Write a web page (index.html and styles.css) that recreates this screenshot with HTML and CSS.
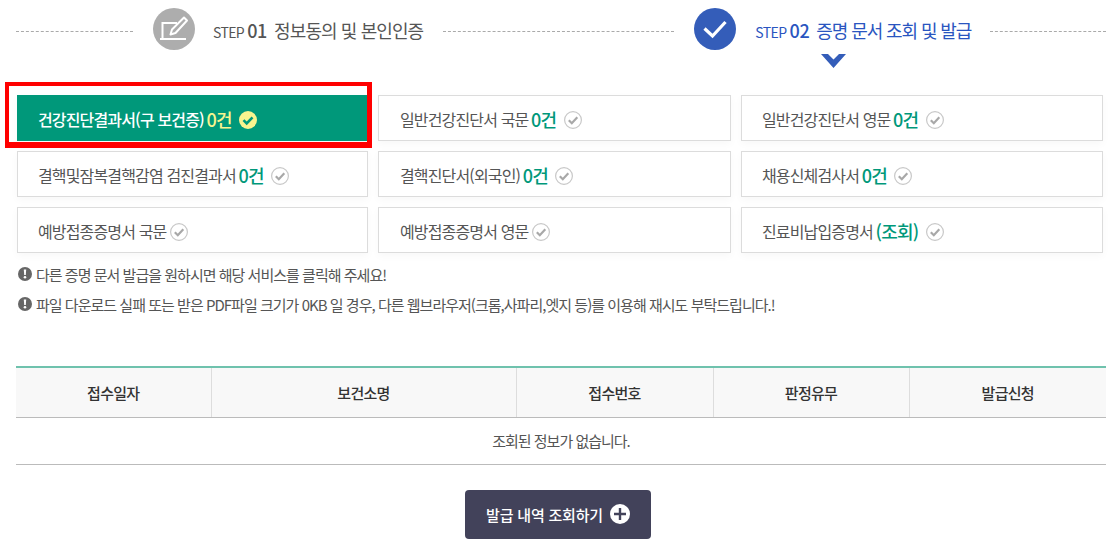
FILE: index.html
```html
<!DOCTYPE html>
<html lang="ko">
<head>
<meta charset="utf-8">
<title>증명 문서 조회 및 발급</title>
<link rel="stylesheet" href="styles.css">
</head>
<body>
<main class="page">
  <div class="steps">
    <span class="dash dash-a"></span>
    <span class="circle circle-off">
      <svg viewBox="0 0 42 42" width="42" height="42"><path d="M24 15H9.500v15" fill="none" stroke="#fff" stroke-width="2"/><path d="M7 31h26" stroke="#fff" stroke-width="2"/><path d="M31 9.500l3 3-11.500 12.500-5 1.500 1.500-5z" fill="none" stroke="#fff" stroke-width="2" stroke-linejoin="round"/></svg>
    </span>
    <span class="step-text"><span class="step-word">STEP</span><b class="step-num">01</b><span class="step-title">정보동의 및 본인인증</span></span>
    <span class="dash dash-b"></span>
    <span class="circle circle-on">
      <svg viewBox="0 0 42 42" width="42" height="42"><path d="M10.500 20.500l8 7.500 13-14" fill="none" stroke="#fff" stroke-width="3.200"/></svg>
    </span>
    <span class="step-text step-text-on"><span class="step-word">STEP</span><b class="step-num">02</b><span class="step-title">증명 문서 조회 및 발급</span>
      <span class="arrow"><svg viewBox="0 0 25 14" width="25" height="14"><path d="M0 0h7l5.500 5.500L18 0h7L12.500 14z" fill="#345db9"/></svg></span>
    </span>
    <span class="dash dash-c"></span>
  </div>

  <div class="docs">
    <a class="doc doc-on">건강진단결과서(구 보건증) <b>0건</b><svg class="tick" viewBox="0 0 18 18" width="18" height="18"><circle cx="9" cy="9" r="9" fill="#f8f48f"/><path d="M4.500 9.200l3.200 3.200 5.800-6" fill="none" stroke="#00987a" stroke-width="2.600"/></svg></a>
    <a class="doc">일반건강진단서 국문 <b>0건</b><svg class="tick" viewBox="0 0 18 18" width="18" height="18"><circle cx="9" cy="9" r="8.400" fill="#fff" stroke="#c8c8c8" stroke-width="1.200"/><path d="M4.800 9.200l3 3 5.500-6" fill="none" stroke="#a8a8a8" stroke-width="2.200"/></svg></a>
    <a class="doc">일반건강진단서 영문 <b>0건</b><svg class="tick" viewBox="0 0 18 18" width="18" height="18"><circle cx="9" cy="9" r="8.400" fill="#fff" stroke="#c8c8c8" stroke-width="1.200"/><path d="M4.800 9.200l3 3 5.500-6" fill="none" stroke="#a8a8a8" stroke-width="2.200"/></svg></a>
    <a class="doc">결핵및잠복결핵감염 검진결과서 <b>0건</b><svg class="tick" viewBox="0 0 18 18" width="18" height="18"><circle cx="9" cy="9" r="8.400" fill="#fff" stroke="#c8c8c8" stroke-width="1.200"/><path d="M4.800 9.200l3 3 5.500-6" fill="none" stroke="#a8a8a8" stroke-width="2.200"/></svg></a>
    <a class="doc">결핵진단서(외국인) <b>0건</b><svg class="tick" viewBox="0 0 18 18" width="18" height="18"><circle cx="9" cy="9" r="8.400" fill="#fff" stroke="#c8c8c8" stroke-width="1.200"/><path d="M4.800 9.200l3 3 5.500-6" fill="none" stroke="#a8a8a8" stroke-width="2.200"/></svg></a>
    <a class="doc">채용신체검사서 <b>0건</b><svg class="tick" viewBox="0 0 18 18" width="18" height="18"><circle cx="9" cy="9" r="8.400" fill="#fff" stroke="#c8c8c8" stroke-width="1.200"/><path d="M4.800 9.200l3 3 5.500-6" fill="none" stroke="#a8a8a8" stroke-width="2.200"/></svg></a>
    <a class="doc">예방접종증명서 국문<svg class="tick tick-plain" viewBox="0 0 18 18" width="18" height="18"><circle cx="9" cy="9" r="8.400" fill="#fff" stroke="#c8c8c8" stroke-width="1.200"/><path d="M4.800 9.200l3 3 5.500-6" fill="none" stroke="#a8a8a8" stroke-width="2.200"/></svg></a>
    <a class="doc">예방접종증명서 영문<svg class="tick tick-plain" viewBox="0 0 18 18" width="18" height="18"><circle cx="9" cy="9" r="8.400" fill="#fff" stroke="#c8c8c8" stroke-width="1.200"/><path d="M4.800 9.200l3 3 5.500-6" fill="none" stroke="#a8a8a8" stroke-width="2.200"/></svg></a>
    <a class="doc">진료비납입증명서 <b>(조회)</b><svg class="tick" viewBox="0 0 18 18" width="18" height="18"><circle cx="9" cy="9" r="8.400" fill="#fff" stroke="#c8c8c8" stroke-width="1.200"/><path d="M4.800 9.200l3 3 5.500-6" fill="none" stroke="#a8a8a8" stroke-width="2.200"/></svg></a>
    <span class="highlight"></span>
  </div>

  <ul class="notes">
    <li><svg class="bang" viewBox="0 0 14 14" width="14" height="14"><circle cx="7" cy="7" r="7" fill="#666"/><path d="M5.800 2.500h2.400l-.4 5.500H6.200z" fill="#fff"/><circle cx="7" cy="10.300" r="1.300" fill="#fff"/></svg>다른 증명 문서 발급을 원하시면 해당 서비스를 클릭해 주세요!</li>
    <li><svg class="bang" viewBox="0 0 14 14" width="14" height="14"><circle cx="7" cy="7" r="7" fill="#666"/><path d="M5.800 2.500h2.400l-.4 5.500H6.200z" fill="#fff"/><circle cx="7" cy="10.300" r="1.300" fill="#fff"/></svg>파일 다운로드 실패 또는 받은 PDF파일 크기가 0KB 일 경우, 다른 웹브라우저(크롬,사파리,엣지 등)를 이용해 재시도 부탁드립니다.!</li>
  </ul>

  <table class="result">
    <colgroup><col class="c1"><col class="c2"><col class="c3"><col class="c4"><col class="c5"></colgroup>
    <thead><tr><th>접수일자</th><th>보건소명</th><th>접수번호</th><th>판정유무</th><th>발급신청</th></tr></thead>
    <tbody><tr><td colspan="5">조회된 정보가 없습니다.</td></tr></tbody>
  </table>

  <div class="actions">
    <a class="more">발급 내역 조회하기<svg viewBox="0 0 20 20" width="20" height="20"><circle cx="10" cy="10" r="10" fill="#fff"/><path d="M10 4v12M4 10h12" stroke="#42425a" stroke-width="2.400"/></svg></a>
  </div>
</main>
</body>
</html>
```

FILE: styles.css
```css
* { box-sizing: border-box; }
html, body { margin: 0; background: #fff; }
body {
  font-family: "Noto Sans CJK KR", "Noto Sans", sans-serif;
  color: #555;
  height: 555px;
  overflow: hidden;
}
.page { width: 1090px; margin-left: 16px; padding-top: 8px; }

.steps { display: flex; align-items: center; height: 44px; }
.dash { height: 0; border-top: 1px dashed #aaa; margin-top: 2px; flex: none; }
.dash-a { width: 117px; margin-right: 20px; }
.dash-b { width: 231px; margin: 2px 20px 0; }
.dash-c { flex: 1; margin-left: 19px; }
.circle { width: 42px; height: 42px; margin-bottom: 2px; border-radius: 50%; display: flex; align-items: center; justify-content: center; flex: none; }
.circle svg { display: block; flex: none; }
.circle-off { background: #adadad; }
.circle-on { background: #345db9; }
.step-text { margin-left: 18px; display: flex; align-items: baseline; white-space: nowrap; color: #555; position: relative; }
.step-text-on { color: #2a55c0; margin-left: 19px; }
.arrow { position: absolute; left: 66px; top: 37px; height: 14px; }
.arrow svg { display: block; }
.step-word { font-size: 14px; letter-spacing: -0.6px; margin-right: 3px; }
.step-num { font-size: 18px; font-weight: 500; letter-spacing: -0.3px; margin-right: 7px; }
.step-title { font-size: 18px; letter-spacing: -0.9px; }
.step-text-on .step-title { letter-spacing: -1.1px; }

.docs {
  position: relative;
  display: grid;
  grid-template-columns: 351px 353px 362px;
  column-gap: 10px;
  row-gap: 10px;
  margin: 43px 0 0 1px;
  width: 1086px;
}
.doc {
  height: 46px;
  background: #fff;
  border: 1px solid #dcdcdc;
  box-shadow: 0 3px 8px rgba(0, 0, 0, .03);
  padding: 2px 0 0 20px;
  display: flex;
  align-items: center;
  font-size: 16px;
  letter-spacing: -0.85px;
  color: #555;
  white-space: pre;
}
.doc:nth-child(3n+2) { padding-left: 21px; }
.doc b { font-size: 18px; font-weight: 500; color: #00987a; letter-spacing: -0.8px; margin-left: -1px; }
.tick { margin: 2px 0 0 7.500px; flex: none; }
.tick-plain { margin-left: 4px; }
.doc-on { background: #00987a; border-color: #00987a; color: #fff; font-weight: 500; }
.doc-on b { color: #f8f48f; }
.highlight {
  position: absolute;
  left: -12px;
  top: -13px;
  width: 367px;
  height: 66px;
  border-style: solid;
  border-color: #f00;
  border-width: 4px 5px 6px 4px;
  pointer-events: none;
}

.notes { list-style: none; margin: 6px 0 0; padding: 0 0 0 2px; font-size: 15px; letter-spacing: -0.98px; color: #555; }
.notes li { display: flex; align-items: center; height: 30px; white-space: nowrap; }
.bang { margin-right: 4px; flex: none; }

.result { width: 1090px; margin-top: 47px; border-collapse: collapse; table-layout: fixed; border-top: 2px solid #6fc2ad; font-size: 15px; letter-spacing: -1px; }
.c1 { width: 195px; } .c2 { width: 305px; } .c3 { width: 197px; } .c4 { width: 196px; } .c5 { width: 197px; }
.result th { height: 50px; background: #f8f8f8; color: #333; font-weight: 500; letter-spacing: -0.7px; border-bottom: 1px solid #bbb; border-left: 1px solid #ddd; padding: 0; }
.result th:first-child { border-left: 0; }
.result td { height: 47px; text-align: center; color: #555; border-bottom: 1px solid #bbb; padding: 0; }

.actions { display: flex; justify-content: center; margin-top: 25px; padding-right: 6px; }
.more {
  width: 186px; height: 49px; background: #42425a; border-radius: 4px;
  display: flex; align-items: center; justify-content: center; gap: 7px;
  color: #fff; font-size: 15px; font-weight: 500; letter-spacing: -0.2px;
}
```
